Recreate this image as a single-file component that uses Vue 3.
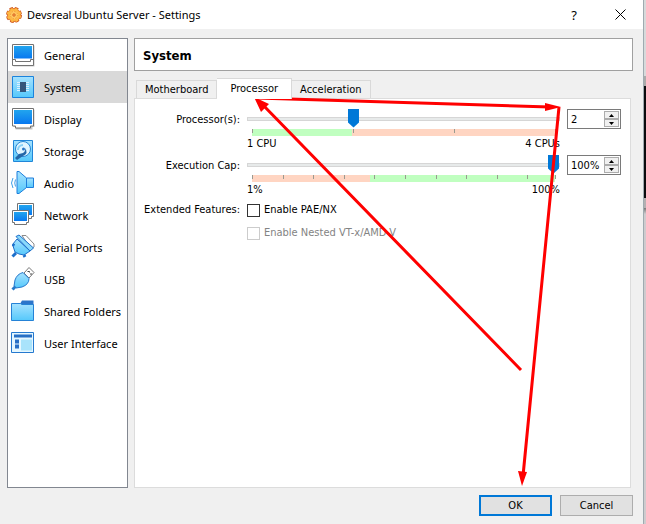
<script setup>
import { ref, computed } from 'vue'

const categories = [
  { id: 'general', label: 'General' },
  { id: 'system', label: 'System' },
  { id: 'display', label: 'Display' },
  { id: 'storage', label: 'Storage' },
  { id: 'audio', label: 'Audio' },
  { id: 'network', label: 'Network' },
  { id: 'serial', label: 'Serial Ports' },
  { id: 'usb', label: 'USB' },
  { id: 'folders', label: 'Shared Folders' },
  { id: 'ui', label: 'User Interface' }
]
const tabs = ['Motherboard', 'Processor', 'Acceleration']

const activeCategory = ref('system')
const activeTab = ref('Processor')
const cpus = ref(2)
const cap = ref(100)
const pae = ref(false)

const heading = computed(() => categories.find(c => c.id === activeCategory.value).label)

// tick positions in percent of the scale
const cpuTicks = [1, 2, 3, 4].map(n => ((n - 1) / 3) * 100)
const capTicks = [1, 11, 21, 31, 41, 51, 61, 71, 81, 91, 100].map(n => ((n - 1) / 99) * 100)

const clamp = (n, min, max) => Math.min(max, Math.max(min, n))
const stepCpus = (d) => { cpus.value = clamp(cpus.value + d, 1, 4) }
const stepCap = (d) => { cap.value = clamp(cap.value + d, 1, 100) }
const setCpus = (e) => { cpus.value = clamp(parseInt(e.target.value) || 1, 1, 4) }
const setCap = (e) => { cap.value = clamp(parseInt(e.target.value) || 1, 1, 100) }
</script>

<template>
  <div class="screen">
    <div class="window">
      <header class="titlebar">
        <svg class="app-icon" viewBox="0 0 16 16">
          <circle cx="8" cy="8" r="6.500" fill="none" stroke="#d0561c" stroke-width="3" stroke-dasharray="3.400 1.700" />
          <circle cx="8" cy="8" r="6.500" fill="#fdb843" stroke="#e0702a" />
          <circle cx="8" cy="8" r="6.200" fill="none" stroke="#fdb843" stroke-width="2" stroke-dasharray="2.300 2.570" stroke-dashoffset="-.5" />
          <circle cx="8" cy="8" r="4" fill="#ffc860" />
          <circle cx="8" cy="8" r="3.600" fill="none" stroke="#f39a35" stroke-dasharray="1.400 1.400" />
          <path d="M7 7h2v2H7z" fill="#ffd98a" stroke="#d9601a" />
        </svg>
        <span class="title">Devsreal Ubuntu Server - Settings</span>
        <button class="caption" aria-label="Help">?</button>
        <button class="caption" aria-label="Close">
          <svg width="11" height="11" viewBox="0 0 11 11"><path d="M.5.5l10 10M10.5.5l-10 10" stroke="#000" fill="none" /></svg>
        </button>
      </header>

      <main class="body">
        <nav class="sidebar">
          <button
            v-for="c in categories"
            :key="c.id"
            :class="['category', { active: c.id === activeCategory }]"
            @click="activeCategory = c.id"
          >
            <svg class="icon" viewBox="0 0 22 22">
              <defs>
                <linearGradient id="screenFill" x1="0" y1="0" x2="0" y2="1">
                  <stop offset="0" stop-color="#22a5ee" /><stop offset="1" stop-color="#0878f0" />
                </linearGradient>
                <linearGradient id="lightFill" x1="0" y1="0" x2="0" y2="1">
                  <stop offset="0" stop-color="#a6e2ff" /><stop offset="1" stop-color="#55c8fb" />
                </linearGradient>
              </defs>
              <g v-if="c.id === 'general'">
                <path d="M1.500 1.500h21v21h-21z" fill="#c9c9c9" />
                <path d="M.5.5h21v21H.5z" fill="#fff" stroke="#737373" />
                <path d="M2 2h18v12.500H2z" fill="url(#screenFill)" />
                <path d="M.5 15.500h3v2h15v-2h3" fill="none" stroke="#737373" />
              </g>
              <g v-else-if="c.id === 'system'">
                <path d="M.5.5h21v21H.5z" fill="url(#lightFill)" stroke="#1b83dc" />
                <path d="M5 6.500h12M5 8.500h12M5 10.500h12M5 12.500h12M5 14.500h12" stroke="#d8efff" />
                <path d="M8 6h6v10H8z" fill="#35567c" />
              </g>
              <g v-else-if="c.id === 'display'">
                <path d="M1.500 1.500h21v17.500h-2v2.500h-17V19h-2z" fill="#c9c9c9" />
                <path d="M.5.5h21v17.500h-3v2h-15v-2h-3z" fill="#fff" stroke="#737373" />
                <path d="M2 2h18v14H2z" fill="url(#screenFill)" />
              </g>
              <g v-else-if="c.id === 'storage'">
                <path d="M1.500.5h19v21h-19z" fill="url(#lightFill)" stroke="#2186d8" />
                <circle cx="11" cy="9" r="7.500" fill="#e0f5ff" stroke="#2585d4" />
                <path d="M6 10a5 5 0 0 1 5-5" stroke="#88d0f6" stroke-width="2" fill="none" />
                <path d="M13 8q4 5-2 8l-6 4-2-2 4-4 4-1q3-2 2-5z" fill="#2467a8" />
                <circle cx="11.500" cy="9" r="1.500" fill="#2675c7" />
              </g>
              <g v-else-if="c.id === 'audio'">
                <path d="M5-.5h2l7.500 6.500v9.500L7 21.500H5z" fill="url(#lightFill)" stroke="#1e7fdc" />
                <path d="M14.500 6h7v9.500h-7z" fill="url(#lightFill)" stroke="#1e7fdc" />
                <path d="M3.500 7.500q-1.500 3.500 0 7M1 6q-3 5 0 10" fill="none" stroke="#3f9fe8" />
              </g>
              <g v-else-if="c.id === 'network'">
                <path d="M5.500-.5h16v13h-2v2h-12v-2h-2z" fill="#fff" stroke="#737373" />
                <path d="M7 1h13v10H7z" fill="url(#screenFill)" />
                <path d="M.5 6.500h16v12h-2v2h-12v-2h-2z" fill="#fff" stroke="#737373" />
                <path d="M2 8h13v9H2z" fill="url(#screenFill)" />
              </g>
              <g v-else-if="c.id === 'serial'">
                <path d="M10-.5h4l8 8.500v3l-3 2z" fill="#fff" stroke="#8a8a8a" />
                <path d="M5 3L.5 8.500 3 16l4 2 5 1 6-4z" fill="url(#lightFill)" stroke="#1d6fca" />
                <path d="M4 .500L7-1l14.500 13-3.500 3z" fill="#8bd9fb" stroke="#1d6fca" />
                <path d="M4 17l-3.500 3.500M12 19l1 2M.5 8.500l2 1" stroke="#1d6fca" stroke-width="3" fill="none" />
              </g>
              <g v-else-if="c.id === 'usb'">
                <path d="M12 5l5-5.500 5 5-5 5.500z" fill="#fff" stroke="#777" />
                <path d="M15.500 3.500h2v1M18 6h2" stroke="#444" stroke-width="1" fill="none" />
                <path d="M11 4.500l6 6q0 6-7 8.500l-6 1-2-2 1-6q2-6 8-7.500z" fill="url(#lightFill)" stroke="#2679cc" />
                <path d="M3.500 18.500L.5 21.500" stroke="#2679cc" stroke-width="3" />
              </g>
              <g v-else-if="c.id === 'folders'">
                <path d="M8 4l2-3.500h11.500V5H8z" fill="#2b75ca" />
                <path d="M-.5 3.500h9l1.500 1h11.500v16h-22z" fill="url(#lightFill)" stroke="#2582d6" />
              </g>
              <g v-else>
                <path d="M-.5.5h22v20h-22z" fill="#e5f7ff" stroke="#2579cf" />
                <path d="M2 2.500h18v3H2zM3 7.500h4v4H3zM3 12.500h4v4H3z" fill="#276fc5" />
                <path d="M9 7.500h11v11H9z" fill="#a9e3fb" />
              </g>
            </svg>
            <span>{{ c.label }}</span>
          </button>
        </nav>

        <section class="content">
          <h1 class="heading">{{ heading }}</h1>

          <div class="tabs" role="tablist">
            <button
              v-for="t in tabs"
              :key="t"
              role="tab"
              :aria-selected="t === activeTab"
              :class="['tab', { active: t === activeTab }]"
              @click="activeTab = t"
            >{{ t }}</button>
          </div>

          <div class="pane">
            <label class="row-label" for="cpus">Processor(s):</label>
            <div class="slider">
              <input id="cpus" v-model.number="cpus" type="range" min="1" max="4">
              <div class="scale cpu-scale">
                <i v-for="p in cpuTicks" :key="p" :style="{ left: p + '%' }"></i>
              </div>
              <div class="limits"><span>1 CPU</span><span>4 CPUs</span></div>
            </div>
            <div class="spinbox">
              <input type="text" :value="cpus" aria-label="Processor count" @change="setCpus">
              <div class="steps">
                <button aria-label="More processors" @click="stepCpus(1)"><svg viewBox="0 0 5 3"><path d="M0 3L2.500 0 5 3z" /></svg></button>
                <button aria-label="Fewer processors" @click="stepCpus(-1)"><svg viewBox="0 0 5 3"><path d="M0 0h5L2.500 3z" /></svg></button>
              </div>
            </div>

            <label class="row-label" for="cap">Execution Cap:</label>
            <div class="slider">
              <input id="cap" v-model.number="cap" type="range" min="1" max="100">
              <div class="scale cap-scale">
                <i v-for="p in capTicks" :key="p" :style="{ left: p + '%' }"></i>
              </div>
              <div class="limits"><span>1%</span><span>100%</span></div>
            </div>
            <div class="spinbox">
              <input type="text" :value="cap + '%'" aria-label="Execution cap" @change="setCap">
              <div class="steps">
                <button aria-label="Raise cap" @click="stepCap(1)"><svg viewBox="0 0 5 3"><path d="M0 3L2.500 0 5 3z" /></svg></button>
                <button aria-label="Lower cap" @click="stepCap(-1)"><svg viewBox="0 0 5 3"><path d="M0 0h5L2.500 3z" /></svg></button>
              </div>
            </div>

            <span class="row-label features-label">Extended Features:</span>
            <div class="features">
              <label class="check"><input v-model="pae" type="checkbox">Enable PAE/NX</label>
              <label class="check disabled"><input type="checkbox" disabled>Enable Nested VT-x/AMD-V</label>
            </div>
          </div>
        </section>
      </main>

      <footer class="actions">
        <button class="btn primary">OK</button>
        <button class="btn">Cancel</button>
      </footer>
    </div>

    <div class="backdrop"></div>

    <!-- walkthrough arrows drawn over the dialog -->
    <svg class="arrows" width="646" height="524" viewBox="0 0 646 524">
      <path d="M521 370L262 104M256 98L550 107M559 107L523 476" />
      <polygon points="254,97 269,104 261,112" />
      <polygon points="561,107 545,103 545,111" />
      <polygon points="522,486 518,471 527,472" />
    </svg>
  </div>
</template>

<style>
body {
  margin: 0;
}
</style>

<style scoped>
.screen {
  position: relative;
  display: flex;
  min-height: 100vh;
  overflow: hidden;
  font-family: "DejaVu Sans Condensed", "DejaVu Sans", sans-serif;
  font-size: 11px;
  line-height: 14px;
  color: #000;
}

.screen *, .screen *::before {
  box-sizing: border-box;
}

button, input {
  font: inherit;
  color: inherit;
  margin: 0;
}

.window {
  flex: 1;
  min-width: 0;
  display: flex;
  flex-direction: column;
  background: #f0f0f0;
}

.backdrop {
  width: 3px;
  border-left: 1px solid #9fabb0;
  background: linear-gradient(#d8dadb 0 76px, #aaa 76px 86px, #0b0c0e 86px 198px, #b5b0b2 198px 208px, #777 208px, #cfcbce 214px);
}

/* title bar */
.titlebar {
  display: flex;
  align-items: center;
  height: 29px;
  padding-left: 6px;
  background: #fff;
  font-family: "Noto Sans", "Open Sans", sans-serif;
}

.app-icon {
  width: 16px;
  height: 16px;
  margin-right: 5px;
  overflow: visible;
}

.title {
  flex: 1;
}

.caption {
  width: 46px;
  height: 29px;
  padding: 0;
  border: 0;
  background: none;
  font-size: 13px;
}

/* main area */
.body {
  flex: 1;
  display: flex;
  gap: 6px;
  padding: 9px 10px 0 7px;
}

.sidebar {
  width: 121px;
  flex: none;
  border: 1px solid #828790;
  background: #fff;
}

.category {
  display: flex;
  align-items: center;
  gap: 10px;
  width: 100%;
  height: 32px;
  padding: 0 0 0 4px;
  border: 0;
  background: none;
  font-family: "Noto Sans", "Open Sans", sans-serif;
  white-space: nowrap;
}

.category span {
  padding-top: 2px;
}

.category.active {
  background: #d9d9d9;
}

.icon {
  width: 22px;
  height: 22px;
  flex: none;
  overflow: visible;
}

.content {
  flex: 1;
  min-width: 0;
  display: flex;
  flex-direction: column;
}

.heading {
  height: 33px;
  margin: 0 0 7px;
  padding-left: 8px;
  border: 1px solid #a0a0a0;
  background: #fff;
  font-size: 13px;
  line-height: 33px;
}

.tabs {
  display: flex;
  align-items: flex-end;
  height: 20px;
  padding-left: 2px;
}

.tab {
  height: 18px;
  padding: 1px 8px 0;
  border: 1px solid #d9d9d9;
  border-bottom: 0;
  background: #f0f0f0;
}

.tab + .tab {
  border-left: 0;
}

.tab.active {
  height: 21px;
  padding: 0 13px;
  margin-bottom: -1px;
  background: #fff;
  z-index: 1;
}

/* settings pane */
.pane {
  flex: 1;
  display: grid;
  grid-template-columns: 96px 1fr 54px;
  align-content: start;
  gap: 4px 7px;
  margin-right: 2px;
  padding: 10px 9px;
  border: 1px solid #dcdcdc;
  background: #fff;
}

.row-label {
  padding-top: 4px;
  text-align: right;
  white-space: nowrap;
}

.slider {
  display: flex;
  flex-direction: column;
  height: 42px;
}

.slider input {
  appearance: none;
  width: 100%;
  height: 19px;
  background: none;
}

.slider input::-webkit-slider-runnable-track {
  height: 4px;
  border: 1px solid #d6d6d6;
  background: #e7eaea;
}

.slider input::-webkit-slider-thumb {
  appearance: none;
  width: 11px;
  height: 19px;
  margin-top: -9px;
  background: #0078d7;
  clip-path: polygon(0 0, 100% 0, 100% 74%, 50% 100%, 0 74%);
}

.scale {
  position: relative;
  height: 7px;
  margin: 1px 5px;
}

.scale i {
  position: absolute;
  top: 0;
  width: 1px;
  height: 4px;
  background: #9a9a90;
}

.cpu-scale {
  background: linear-gradient(90deg, #c0ffc0 33%, #ffd5c2 33%);
}

.cap-scale {
  background: linear-gradient(90deg, #ffd5c2 39%, #c0ffc0 39%);
}

.limits {
  display: flex;
  justify-content: space-between;
}

.spinbox {
  display: flex;
  height: 20px;
  padding: 1px;
  border: 1px solid #7a7a7a;
}

.spinbox input {
  flex: 1;
  width: 0;
  padding: 2px 2px 0;
  border: 0;
  outline: 0;
}

.steps {
  display: flex;
  flex-direction: column;
  width: 15px;
}

.steps button {
  flex: 1;
  display: flex;
  align-items: center;
  justify-content: center;
  padding: 0;
  border: 1px solid #acacac;
  background: #f0f0f0;
}

.steps svg {
  width: 5px;
  height: 3px;
}

.features-label {
  padding-top: 2px;
}

.features {
  grid-column: 2 / 4;
  display: flex;
  flex-direction: column;
  gap: 9px;
  padding-top: 2px;
}

.check {
  display: flex;
  align-items: center;
  gap: 4px;
}

.check input {
  appearance: none;
  width: 13px;
  height: 13px;
  border: 1px solid #333;
  background: #fff;
}

.check input:checked {
  background: #0078d7;
}

.check.disabled {
  color: #838383;
}

.check.disabled input {
  border-color: #ccc;
}

/* bottom buttons */
.actions {
  display: flex;
  justify-content: flex-end;
  gap: 8px;
  padding: 7px 10px 8px;
}

.btn {
  width: 73px;
  height: 21px;
  padding: 0;
  border: 1px solid #adadad;
  background: #e1e1e1;
}

.btn.primary {
  border: 2px solid #0078d7;
}

/* annotation layer */
.arrows {
  position: absolute;
  top: 0;
  left: 0;
  pointer-events: none;
}

.arrows path {
  fill: none;
  stroke: #f00;
  stroke-width: 3;
}

.arrows polygon {
  fill: #f00;
}
</style>
